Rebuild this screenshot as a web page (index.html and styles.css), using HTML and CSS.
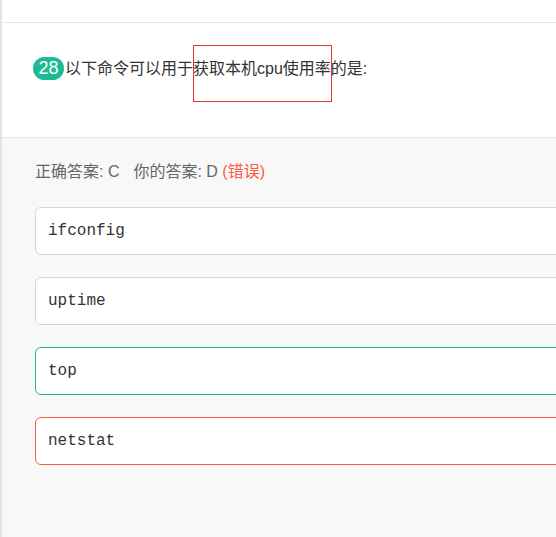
FILE: index.html
```html
<!DOCTYPE html>
<html lang="zh-CN">
<head>
<meta charset="utf-8">
<title>题目</title>
<link rel="stylesheet" href="styles.css">
</head>
<body>
<div class="page">
  <div class="topbar"></div>
  <div class="question">
    <span class="badge">28</span><span class="qtext">以下命令可以用于<span class="hl">获取本机cpu使用率<span class="hl-box"></span></span>的是:</span>
  </div>
  <div class="answers">
    <div class="result">正确答案: C<span class="sep"></span>你的答案: D <span class="wrong">(错误)</span></div>
    <div class="opt">ifconfig</div>
    <div class="opt">uptime</div>
    <div class="opt correct">top</div>
    <div class="opt chosen">netstat</div>
  </div>
</div>
</body>
</html>
```
FILE: styles.css
```css
html, body {
  margin: 0;
  padding: 0;
  overflow: hidden;
  background: #f8f8f8;
}
.page {
  width: 760px;
  min-height: 537px;
  border-left: 2px solid #e2e2e2;
  background: #f8f8f8;
  font-family: "Liberation Sans", "Noto Sans CJK SC", sans-serif;
}
.topbar {
  height: 22px;
  background: #fff;
  border-bottom: 1px solid #e6e6e6;
}
.question {
  height: 115px;
  box-sizing: border-box;
  background: #fff;
  border-bottom: 1px solid #e6e6e6;
  padding: 34px 0 0 31px;
  display: flex;
  align-items: flex-start;
}
.badge {
  display: inline-block;
  width: 31px;
  height: 23px;
  line-height: 23px;
  border-radius: 12px;
  background: #1dba97;
  color: #fff;
  font-size: 18px;
  text-align: center;
}
.qtext {
  margin-left: 1px;
  font-size: 16px;
  line-height: 23px;
  color: #333;
}
.hl {
  position: relative;
  display: inline-block;
  height: 23px;
  vertical-align: top;
}
.hl-box {
  position: absolute;
  left: 0;
  right: -1px;
  top: -12px;
  height: 57px;
  box-sizing: border-box;
  border: 1px solid rgb(230, 50, 50);
  color: rgb(230, 50, 50);
}
.answers {
  padding: 23px 0 0 33px;
}
.result {
  font-size: 16px;
  line-height: 22px;
  color: #666;
  margin-bottom: 24px;
}
.sep {
  display: inline-block;
  width: 14px;
}
.wrong {
  color: #fa5c3c;
}
.opt {
  height: 48px;
  box-sizing: border-box;
  border: 1px solid #d6d6d6;
  border-radius: 6px;
  background: #fff;
  padding-left: 12px;
  display: flex;
  align-items: center;
  font-family: "Liberation Mono", "Courier New", monospace;
  font-size: 16px;
  color: #333;
  margin-bottom: 22px;
}
.opt.correct {
  border-color: #1dba97;
}
.opt.chosen {
  border-color: #fa5c3c;
}
```
